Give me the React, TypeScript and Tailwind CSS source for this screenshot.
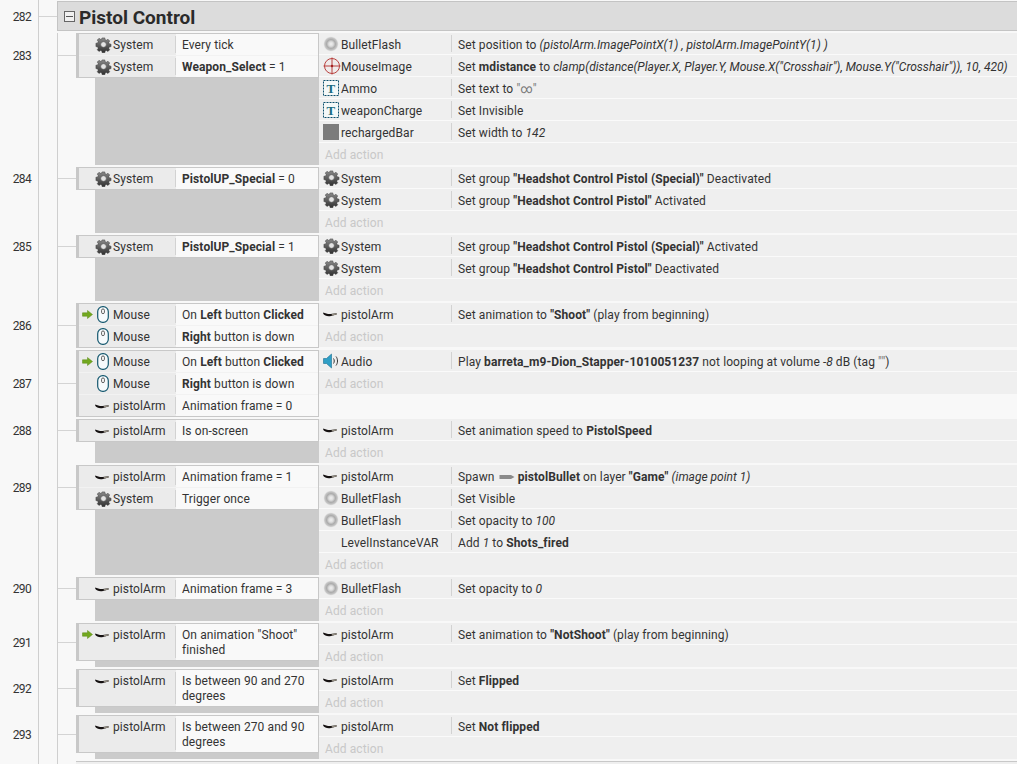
import React from "react";

const Gear = () => (
  <svg width="17" height="17" viewBox="0 0 17 17" className="shrink-0">
    <defs>
      <linearGradient id="gearFill" x1="0" y1="0" x2="0" y2="1">
        <stop offset="0" stopColor="#8a8a8a" />
        <stop offset="1" stopColor="#2e2e2e" />
      </linearGradient>
    </defs>
    <path
      fill="url(#gearFill)"
      stroke="#333"
      strokeWidth="0.5"
      d="M7 1h3l.4 2 1.5.6 1.7-1.1 2 2-1.1 1.7.6 1.5 2 .4v2.8l-2 .4-.6 1.5 1.1 1.7-2 2-1.7-1.1-1.5.6-.4 2H7l-.4-2-1.5-.6-1.7 1.1-2-2 1.1-1.7-.6-1.5-2-.4V7.1l2-.4.6-1.5-1.1-1.7 2-2 1.7 1.1 1.5-.6z"
      transform="translate(1 1) scale(0.88)"
    />
    <circle cx="8.5" cy="8.5" r="2.8" fill="#e4e4e4" stroke="#555" strokeWidth="0.6" />
  </svg>
);

const Flash = () => (
  <svg width="16" height="16" viewBox="0 0 16 16" className="shrink-0">
    <defs>
      <radialGradient id="flashFill">
        <stop offset="0" stopColor="#f0f0f0" />
        <stop offset="0.28" stopColor="#dddddd" />
        <stop offset="0.55" stopColor="#ababab" />
        <stop offset="0.8" stopColor="#c8c8c8" />
        <stop offset="1" stopColor="#efefef" stopOpacity="0" />
      </radialGradient>
    </defs>
    <circle cx="8" cy="8" r="8" fill="url(#flashFill)" />
  </svg>
);

const Cross = () => (
  <svg width="18" height="18" viewBox="0 0 18 18" className="shrink-0">
    <circle cx="9" cy="9" r="7.5" fill="#f2e6e6" fillOpacity="0.4" stroke="#b8413f" strokeWidth="1" />
    <path d="M9 0.5V17.5M0.5 9H17.5" stroke="#b8413f" strokeWidth="1" />
    <circle cx="9" cy="9" r="1.2" fill="#a02020" />
  </svg>
);

const TextIcon = () => (
  <svg width="16" height="16" viewBox="0 0 16 16" className="shrink-0">
    <rect x="0.5" y="0.5" width="15" height="15" fill="#f4f8f8" stroke="#0d4f6c" strokeWidth="1" strokeDasharray="2 1" />
    <text x="8" y="12.5" textAnchor="middle" fontFamily="Liberation Serif" fontWeight="700" fontSize="13" fill="#1a6a80">T</text>
  </svg>
);

const GrayBox = () => <div className="h-4 w-4 shrink-0 bg-[#7c7c7c]" />;

const ArmIcon = () => (
  <svg width="14" height="16" viewBox="0 0 14 16" className="shrink-0">
    <path d="M0.3 6.4C2 7.2 5 8.2 7.5 8L13.6 7.2V8.4L8 10C5 11 1.5 9.8 0.2 7.8z" fill="#141010" />
    <path d="M8.6 8L13.7 7.2V8.4L9 9.6z" fill="#938d82" />
  </svg>
);

const MouseIcon = () => (
  <svg width="12" height="17" viewBox="0 0 12 17" className="ml-[2px] shrink-0">
    <rect x="0.7" y="0.7" width="10.6" height="15.6" rx="5" fill="#f6fafc" stroke="#14576e" strokeWidth="1.2" />
    <rect x="4.6" y="3" width="2.8" height="4.6" rx="1.3" fill="#fff" stroke="#333" strokeWidth="0.8" />
  </svg>
);

const GreenArrow = () => (
  <svg width="11" height="9" viewBox="0 0 11 9" className="shrink-0">
    <path d="M0.5 2.8H5.5V0.5L10.5 4.5 5.5 8.5V6.2H0.5z" fill="#72a81e" stroke="#5a8a16" strokeWidth="0.5" />
  </svg>
);

const Speaker = () => (
  <svg width="17" height="16" viewBox="0 0 17 16" className="shrink-0">
    <path d="M0.5 5.5H3.5L8.5 1V15L3.5 10.5H0.5z" fill="#2f9fc6" stroke="#1b6f92" strokeWidth="0.6" />
    <path d="M10.5 5.5C11.5 7 11.5 9 10.5 10.5M13 3.5C15 6 15 10 13 12.5" fill="none" stroke="#333" strokeWidth="1" />
  </svg>
);

const BulletMini = () => (
  <svg width="16" height="8" viewBox="0 0 16 8" className="ml-[1px] mr-[3px] inline-block align-[0px]">
    <path d="M0.5 2H12L15.5 4 12 6H0.5z" fill="#8a8a8a" />
  </svg>
);

type Icon = "gear" | "flash" | "cross" | "text" | "box" | "arm" | "mouse" | "speaker" | "none";

const icons: Record<Icon, React.ReactNode> = {
  gear: <Gear />,
  flash: <Flash />,
  cross: <Cross />,
  text: <TextIcon />,
  box: <GrayBox />,
  arm: <ArmIcon />,
  mouse: <MouseIcon />,
  speaker: <Speaker />,
  none: null,
};

type Cond = { icon: Icon; obj: string; text: React.ReactNode; trigger?: boolean; tall?: boolean };
type Act = { icon: Icon; obj: string; text: React.ReactNode };
type Ev = { n: number; conds: Cond[]; acts: Act[]; blank?: boolean; cls: string };

const CondRow = ({ c, last }: { c: Cond; last: boolean }) => (
  <div className={`flex ${c.tall ? "h-[37px]" : "h-[22px]"} border-b ${last ? "border-[#c8c8c8]" : "border-[#f2f2f2]"}`}>
    <div className="flex w-[97px] shrink-0 items-start bg-[#ebebeb] pt-[2px]">
      <div className="flex h-[16px] w-[16px] shrink-0 items-center justify-start">
        {c.trigger ? <span className="ml-[3px] flex"><GreenArrow /></span> : null}
      </div>
      <div className="flex h-[17px] w-[18px] shrink-0 items-center justify-start">{icons[c.icon]}</div>
      <div className="pt-[2px] leading-[15px]">{c.obj}</div>
    </div>
    <div className="relative flex-1 bg-[#f9f9f9] pl-[6px] pt-[4px] leading-[15px]">
      <div className="absolute bottom-[2px] left-[-1px] top-[2px] w-px bg-[#d2d2d2]" />
      {c.text}
    </div>
  </div>
);

const ActRow = ({ a }: { a: Act }) => (
  <div className="flex h-[22px] items-stretch border-b border-[#fafafa] bg-[#efefef]">
    <div className="flex w-[4px] shrink-0" />
    <div className="flex w-[18px] shrink-0 items-center">{icons[a.icon]}</div>
    <div className="w-[110px] shrink-0 leading-[25px]">{a.obj}</div>
    <div className="my-[2px] w-px shrink-0 bg-[#d2d2d2]" />
    <div className="whitespace-nowrap pl-[6px] leading-[25px]">{a.text}</div>
  </div>
);

const AddAction = () => (
  <div className="h-[22px] bg-[#efefef] pl-[6px] leading-[25px] text-[#c8c8c8]">Add action</div>
);

const B = ({ children }: { children: React.ReactNode }) => <b className="font-bold">{children}</b>;
const I = ({ children }: { children: React.ReactNode }) => <i className="italic tracking-normal">{children}</i>;

const pa = "pistolArm";
const events: Ev[] = [
  {
    n: 283,
    cls: "h-[45px]",
    conds: [
      { icon: "gear", obj: "System", text: "Every tick" },
      { icon: "gear", obj: "System", text: <><B>Weapon_Select</B> = 1</> },
    ],
    acts: [
      { icon: "flash", obj: "BulletFlash", text: <>Set position to <I>(pistolArm.ImagePointX(1) , pistolArm.ImagePointY(1) )</I></> },
      { icon: "cross", obj: "MouseImage", text: <>Set <B>mdistance</B> to <I>clamp(distance(Player.X, Player.Y, Mouse.X("Crosshair"), Mouse.Y("Crosshair")), 10, 420)</I></> },
      { icon: "text", obj: "Ammo", text: <>Set text to <span className="text-[#777]">"∞"</span></> },
      { icon: "text", obj: "weaponCharge", text: "Set Invisible" },
      { icon: "box", obj: "rechargedBar", text: <>Set width to <I>142</I></> },
    ],
  },
  {
    n: 284,
    cls: "h-[23px]",
    conds: [{ icon: "gear", obj: "System", text: <><B>PistolUP_Special</B> = 0</> }],
    acts: [
      { icon: "gear", obj: "System", text: <>Set group <B>"Headshot Control Pistol (Special)"</B> Deactivated</> },
      { icon: "gear", obj: "System", text: <>Set group <B>"Headshot Control Pistol"</B> Activated</> },
    ],
  },
  {
    n: 285,
    cls: "h-[23px]",
    conds: [{ icon: "gear", obj: "System", text: <><B>PistolUP_Special</B> = 1</> }],
    acts: [
      { icon: "gear", obj: "System", text: <>Set group <B>"Headshot Control Pistol (Special)"</B> Activated</> },
      { icon: "gear", obj: "System", text: <>Set group <B>"Headshot Control Pistol"</B> Deactivated</> },
    ],
  },
  {
    n: 286,
    cls: "h-[45px]",
    conds: [
      { icon: "mouse", obj: "Mouse", trigger: true, text: <>On <B>Left</B> button <B>Clicked</B></> },
      { icon: "mouse", obj: "Mouse", text: <><B>Right</B> button is down</> },
    ],
    acts: [{ icon: "arm", obj: pa, text: <>Set animation to <B>"Shoot"</B> (play from beginning)</> }],
  },
  {
    n: 287,
    cls: "h-[67px]",
    blank: true,
    conds: [
      { icon: "mouse", obj: "Mouse", trigger: true, text: <>On <B>Left</B> button <B>Clicked</B></> },
      { icon: "mouse", obj: "Mouse", text: <><B>Right</B> button is down</> },
      { icon: "arm", obj: pa, text: "Animation frame = 0" },
    ],
    acts: [{ icon: "speaker", obj: "Audio", text: <>Play <B>barreta_m9-Dion_Stapper-1010051237</B> not looping at volume <I>-8</I> dB (tag <span className="text-[#777]">""</span>)</> }],
  },
  {
    n: 288,
    cls: "h-[23px]",
    conds: [{ icon: "arm", obj: pa, text: "Is on-screen" }],
    acts: [{ icon: "arm", obj: pa, text: <>Set animation speed to <B>PistolSpeed</B></> }],
  },
  {
    n: 289,
    cls: "h-[45px]",
    conds: [
      { icon: "arm", obj: pa, text: "Animation frame = 1" },
      { icon: "gear", obj: "System", text: "Trigger once" },
    ],
    acts: [
      { icon: "arm", obj: pa, text: <>Spawn <BulletMini /><B>pistolBullet</B> on layer <B>"Game"</B> <I>(image point 1)</I></> },
      { icon: "flash", obj: "BulletFlash", text: "Set Visible" },
      { icon: "flash", obj: "BulletFlash", text: <>Set opacity to <I>100</I></> },
      { icon: "none", obj: "LevelInstanceVAR", text: <>Add <I>1</I> to <B>Shots_fired</B></> },
    ],
  },
  {
    n: 290,
    cls: "h-[23px]",
    conds: [{ icon: "arm", obj: pa, text: "Animation frame = 3" }],
    acts: [{ icon: "flash", obj: "BulletFlash", text: <>Set opacity to <I>0</I></> }],
  },
  {
    n: 291,
    cls: "h-[38px]",
    conds: [{ icon: "arm", obj: pa, trigger: true, tall: true, text: <>On animation "Shoot"<br />finished</> }],
    acts: [{ icon: "arm", obj: pa, text: <>Set animation to <B>"NotShoot"</B> (play from beginning)</> }],
  },
  {
    n: 292,
    cls: "h-[38px]",
    conds: [{ icon: "arm", obj: pa, tall: true, text: <>Is between 90 and 270<br />degrees</> }],
    acts: [{ icon: "arm", obj: pa, text: <>Set <B>Flipped</B></> }],
  },
  {
    n: 293,
    cls: "h-[38px]",
    conds: [{ icon: "arm", obj: pa, tall: true, text: <>Is between 270 and 90<br />degrees</> }],
    acts: [{ icon: "arm", obj: pa, text: <>Set <B>Not flipped</B></> }],
  },
];

const EventRow = ({ e }: { e: Ev }) => (
  <div className="flex">
    <div className="w-[39px] shrink-0 border-r border-[#cfcfcf] pb-[2px]">
      <div className={`flex ${e.cls} items-center justify-center pl-[6px] pt-[1px] text-[12px] tracking-[-0.5px]`}>{e.n}</div>
    </div>
    <div className="w-[19px] shrink-0 border-r border-[#cfcfcf]" />
    <div className="w-[18px] shrink-0">
      <div className={`flex ${e.cls} items-center`}>
        <div className="h-px w-full bg-[#d4d4d4]" />
      </div>
    </div>
    <div className="flex w-[243px] shrink-0 flex-col pb-[2px]">
      <div className="border-x border-t border-l-[3px] border-[#c8c8c8] bg-[#f9f9f9]">
        {e.conds.map((c, i) => (
          <CondRow key={i} c={c} last={i === e.conds.length - 1} />
        ))}
      </div>
      <div className={`ml-[19px] flex-1 ${e.blank ? "" : "bg-[#cbcbcb]"}`} />
    </div>
    <div className="min-w-0 flex-1 pb-[2px]">
      {e.acts.map((a, i) => (
        <ActRow key={i} a={a} />
      ))}
      <AddAction />
    </div>
  </div>
);

export default function App() {
  return (
    <div
      className="h-[764px] w-[1017px] overflow-hidden bg-[#f8f8f8] text-[12px] tracking-[0.1px] text-[#333]"
      style={{ fontFamily: 'Roboto, "Noto Sans", sans-serif' }}
    >
      <div className="flex h-[33px]">
        <div className="w-[39px] shrink-0 border-r border-[#cfcfcf]">
          <div className="flex h-[32px] items-center justify-center pl-[6px] pt-[1px] text-[12px] tracking-[-0.5px]">282</div>
        </div>
        <div className="flex h-[32px] w-[18px] shrink-0 items-center">
          <div className="h-px w-full bg-[#d4d4d4]" />
        </div>
        <div className="mt-px flex h-[30px] flex-1 items-center border border-r-0 border-[#c4c4c4] bg-[#dcdcdc] pl-[6px]">
          <div className="flex h-[11px] w-[11px] items-center justify-center border border-[#666] bg-[#f0f0f0]">
            <div className="h-px w-[7px] bg-[#555]" />
          </div>
          <span className="ml-[4px] pt-[3px] text-[19px] font-bold leading-none tracking-normal text-[#2a2a2a]">Pistol Control</span>
        </div>
      </div>
      {events.map((e) => (
        <EventRow key={e.n} e={e} />
      ))}
      <div className="flex">
        <div className="h-[20px] w-[39px] shrink-0 border-r border-[#cfcfcf]" />
        <div className="h-[20px] w-[19px] shrink-0 border-r border-[#cfcfcf]" />
        <div className="w-[18px] shrink-0" />
        <div className="h-[20px] flex-1 border-t border-[#c8c8c8] bg-[#efefef]" />
      </div>
    </div>
  );
}
